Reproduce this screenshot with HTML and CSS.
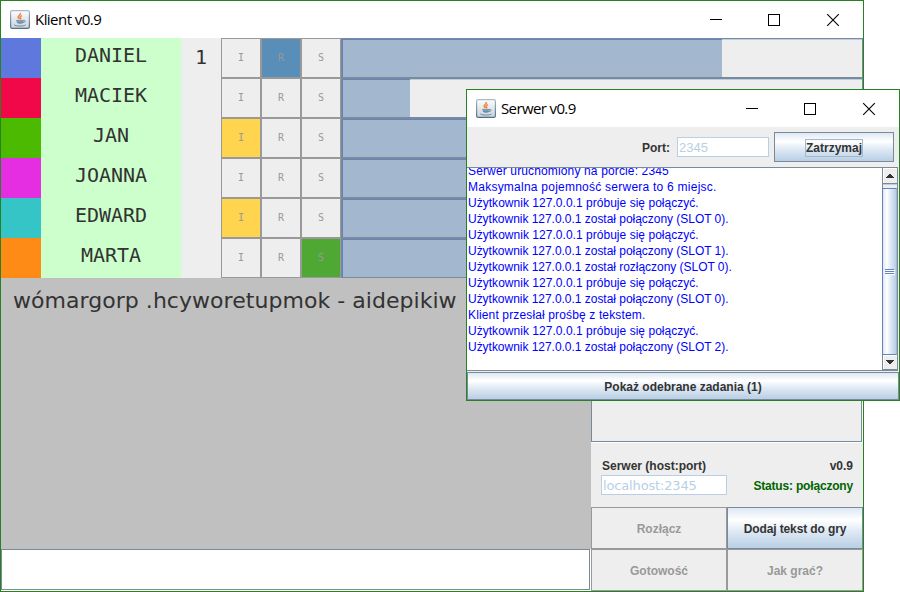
FILE: index.html
```html
<!DOCTYPE html>
<html lang="pl">
<head>
<meta charset="utf-8">
<title>Klient v0.9</title>
<link rel="stylesheet" href="styles.css">
</head>
<body>
<svg width="0" height="0" class="defs">
  <defs>
    <linearGradient id="tile" x1="0" y1="0" x2="0" y2="1"><stop offset="0" stop-color="#fdfdfd"/><stop offset="1" stop-color="#c9d2d9"/></linearGradient>
    <linearGradient id="edge" x1="0" y1="0" x2="0" y2="1"><stop offset="0" stop-color="#a9bac6"/><stop offset="1" stop-color="#537083"/></linearGradient>
    <symbol id="java" viewBox="0 0 20 19">
      <rect x=".6" y=".6" width="18.8" height="17.8" rx="1.6" fill="url(#tile)" stroke="url(#edge)" stroke-width="1.2"/>
      <path d="M10.400 3c.8 1.800-3 2.600-2.200 4.600.3.800 1 1 1.200 1.600M12 5.600c-2.300 1-2.200 1.700-1.300 2.700.3.400.1.800-.4 1.200" fill="none" stroke="#ee8746" stroke-width="1.500"/>
      <path d="M6.500 10.600h7v1c0 1.500-1.200 2.300-3.400 2.300s-3.400-.8-3.600-2.300z" fill="#8ba6bb"/>
      <path d="M6.300 10.400c2 .6 5.300.6 7.300 0M7 12.400c1.800.5 4 .5 5.700 0M13.300 10.600c2.800-.8 2.300 1.700-.3 2M4.300 14.800c1 1.700 10 1.700 11.300 0" fill="none" stroke="#6a8ba6" stroke-width="1"/>
    </symbol>
    <symbol id="controls" viewBox="0 0 130 14">
      <path d="M0 6.500h12" stroke="#000" fill="none"/>
      <rect x="58.500" y="1.500" width="11" height="11" stroke="#000" fill="none"/>
      <path d="M117.200 1.200l11.600 11.600M128.800 1.200L117.200 12.800" stroke="#000" stroke-width="1.100" fill="none"/>
    </symbol>
  </defs>
</svg>

<main class="window client">
  <header class="titlebar">
    <svg class="app-icon"><use href="#java"/></svg>
    <h1 class="title">Klient v0.9</h1>
    <svg class="controls"><use href="#controls"/></svg>
  </header>
  <section class="players">
    <div class="player"><i class="swatch blue"></i><span class="name">DANIEL</span><span class="place">1</span><b class="cell">I</b><b class="cell is-r">R</b><b class="cell">S</b><div class="progress"><div class="fill" style="width:380px"></div></div></div>
    <div class="player"><i class="swatch red"></i><span class="name">MACIEK</span><span class="place"></span><b class="cell">I</b><b class="cell">R</b><b class="cell">S</b><div class="progress"><div class="fill" style="width:68px"></div></div></div>
    <div class="player"><i class="swatch green"></i><span class="name">JAN</span><span class="place"></span><b class="cell is-i">I</b><b class="cell">R</b><b class="cell">S</b><div class="progress"><div class="fill" style="width:520px"></div></div></div>
    <div class="player"><i class="swatch pink"></i><span class="name">JOANNA</span><span class="place"></span><b class="cell">I</b><b class="cell">R</b><b class="cell">S</b><div class="progress"><div class="fill" style="width:520px"></div></div></div>
    <div class="player"><i class="swatch teal"></i><span class="name">EDWARD</span><span class="place"></span><b class="cell is-i">I</b><b class="cell">R</b><b class="cell">S</b><div class="progress"><div class="fill" style="width:520px"></div></div></div>
    <div class="player"><i class="swatch orange"></i><span class="name">MARTA</span><span class="place"></span><b class="cell">I</b><b class="cell">R</b><b class="cell is-s">S</b><div class="progress"><div class="fill" style="width:520px"></div></div></div>
  </section>
  <div class="body">
    <section class="game">
      <div class="task"><span class="task-text">wómargorp .hcyworetupmok - aidepikiw</span></div>
      <div class="answer"></div>
    </section>
    <aside class="side">
      <div class="list"></div>
      <div class="connection">
        <div class="line"><span>Serwer (host:port)</span><span>v0.9</span></div>
        <div class="line"><span class="field host">localhost:2345</span><span class="status">Status: połączony</span></div>
      </div>
      <div class="actions">
        <span class="btn off">Rozłącz</span>
        <span class="btn add">Dodaj tekst do gry</span>
        <span class="btn off">Gotowość</span>
        <span class="btn off">Jak grać?</span>
      </div>
    </aside>
  </div>
</main>

<section class="window server">
  <header class="titlebar">
    <svg class="app-icon"><use href="#java"/></svg>
    <h2 class="title server-title">Serwer v0.9</h2>
    <svg class="controls"><use href="#controls"/></svg>
  </header>
  <div class="toolbar">
    <span class="port-label">Port:</span>
    <span class="field port">2345</span>
    <span class="btn stop"><span class="focus">Zatrzymaj</span></span>
  </div>
  <div class="log-pane">
    <div class="log">
      <p class="wide">Serwer uruchomiony na porcie: 2345</p>
      <p class="wider">Maksymalna pojemność serwera to 6 miejsc.</p>
      <p class="try">Użytkownik 127.0.0.1 próbuje się połączyć.</p>
      <p class="slot">Użytkownik 127.0.0.1 został połączony (SLOT 0).</p>
      <p class="try">Użytkownik 127.0.0.1 próbuje się połączyć.</p>
      <p class="slot">Użytkownik 127.0.0.1 został połączony (SLOT 1).</p>
      <p class="slot">Użytkownik 127.0.0.1 został rozłączony (SLOT 0).</p>
      <p class="try">Użytkownik 127.0.0.1 próbuje się połączyć.</p>
      <p class="slot">Użytkownik 127.0.0.1 został połączony (SLOT 0).</p>
      <p class="wide">Klient przesłał prośbę z tekstem.</p>
      <p class="try">Użytkownik 127.0.0.1 próbuje się połączyć.</p>
      <p class="slot">Użytkownik 127.0.0.1 został połączony (SLOT 2).</p>
    </div>
    <div class="scrollbar">
      <div class="arrow"><svg width="8" height="4" shape-rendering="crispEdges"><path d="M3 0h2v1h1v1h1v1h1v1H0V3h1V2h1V1h1z" fill="#333"/></svg></div>
      <div class="gap"></div>
      <div class="thumb"><i></i><i></i><i></i></div>
      <div class="arrow down"><svg width="8" height="4" shape-rendering="crispEdges"><path d="M0 0h8v1H7v1H6v1H5v1H3V3H2V2H1V1H0z" fill="#333"/></svg></div>
    </div>
  </div>
  <span class="btn tasks">Pokaż odebrane zadania (1)</span>
</section>
</body>
</html>
```
FILE: styles.css
```css
* { box-sizing: border-box; }
body {
  margin: 0;
  width: 900px;
  height: 592px;
  overflow: hidden;
  background: #fff;
  color: #333;
  font: bold 12px/16px "Liberation Sans", sans-serif;
}
p, h1, h2 { margin: 0; }
.defs { position: absolute; }
.window {
  display: flex;
  flex-direction: column;
  border: 1px solid #26821f;
  background: #eee;
}
.client { width: 864px; height: 592px; }
.server { position: absolute; left: 466px; top: 89px; width: 434px; height: 312px; }

.titlebar {
  display: flex;
  align-items: center;
  flex: none;
  height: 37px;
  padding: 0 23px 0 9px;
  background: #fff;
}
.app-icon { width: 20px; height: 19px; margin-right: 5px; margin-top: -1px; }
.title { flex: 1; margin-top: -2px; color: #000; font: 15px/20px "Open Sans", sans-serif; letter-spacing: -0.55px; }
.server-title { letter-spacing: -0.62px; }
.controls { width: 130px; height: 14px; }

.player { display: flex; height: 40px; }
.swatch { width: 40px; }
.blue { background: #5f78de; }
.red { background: #f00848; }
.green { background: #4cba00; }
.pink { background: #e52de1; }
.teal { background: #35c5c7; }
.orange { background: #ff8b17; }
.name, .place { font: 20px/35px "DejaVu Sans Mono", monospace; text-align: center; }
.name { width: 140px; background: #cfc; letter-spacing: -0.04px; }
.place { width: 40px; line-height: 38px; }
.cell {
  width: 40px;
  border: 1px solid #999;
  color: #999;
  font: 10px/38px "DejaVu Sans Mono", monospace;
  text-align: center;
}
.is-i { background: #ffd44f; }
.is-r { background: #588eb7; }
.is-s { background: #4fa833; }
.progress {
  width: 522px;
  border: 1px solid #7a8a99;
  background: #eee;
  box-shadow: inset 0 1px #b8cfe5;
}
.fill { height: 38px; background: #a3b8cf; border-top: 1px solid #6382bf; border-left: 1px solid #6382bf; }

.body { display: flex; flex: 1; }
.game { display: flex; flex-direction: column; width: 590px; background: #fff; }
.task { flex: 1; padding: 8px 0 0 12px; background: #c0c0c0; }
.task-text { font: 22px/30px "DejaVu Sans", sans-serif; letter-spacing: 0.04px; white-space: nowrap; }
.answer { height: 41px; margin: 0 1px 1px 0; background: #fff; border: 1px solid #7a8a99; }
.side { flex: 1; display: flex; flex-direction: column; }
.list { height: 164px; margin-right: 1px; border: 1px solid #7a8a99; box-shadow: 0 1px #fff, 1px 0 #fff; }
.connection { flex: 1; padding: 16px 10px 0; }
.line { display: flex; justify-content: space-between; align-items: center; height: 16px; padding-left: 1px; }
.line + .line { height: 22px; padding-left: 0; }
.field { border: 1px solid #b8cfe5; background: #fff; color: #b8cfe5; height: 20px; line-height: 19px; padding-left: 1px; }
.host { width: 126px; font: 13px/19px "DejaVu Sans", sans-serif; letter-spacing: -0.15px; }
.status { padding-top: 2px; color: #006400; letter-spacing: -0.18px; }
.actions { display: grid; grid-template-columns: 136px 136px; grid-template-rows: 42px 42px; }
.btn {
  display: flex;
  align-items: center;
  justify-content: center;
  border: 1px solid #7a8a99;
  background: linear-gradient(#dde8f3 0%, #fff 30%, #dde8f3 60%, #b8cfe5 100%);
}
.actions .btn, .tasks { padding-top: 2px; }
.add { letter-spacing: -0.12px; }
.off { background: #eee; border-color: #999; color: #999; }

.toolbar { display: flex; align-items: center; justify-content: flex-end; height: 40px; flex: none; padding-right: 5px; }
.port-label { padding-top: 1px; }
.port { width: 92px; margin: 0 5px 0 7px; font-weight: normal; font-size: 13px; }
.stop { width: 120px; height: 30px; }
.focus { height: 18px; line-height: 16px; border: 1px solid #a3b8cc; margin-top: 1px; }
.log-pane { display: flex; height: 204px; margin-right: 1px; border-top: 1px solid #7a8a99; border-bottom: 1px solid #7a8a99; border-right: 1px solid #7a8a99; background: #fff; }
.log { display: flex; flex-direction: column; justify-content: flex-end; flex: 1; height: 187px; overflow: hidden; padding-left: 1px; color: #00f; font-weight: normal; white-space: nowrap; }
.log p { flex: none; }
.wide { letter-spacing: 0.14px; }
.wider { letter-spacing: 0.24px; }
.try { letter-spacing: 0.03px; }
.slot { letter-spacing: -0.03px; }
.scrollbar { display: flex; flex-direction: column; width: 15px; border-left: 1px solid #7a8a99; background: #eee; }
.arrow { display: flex; align-items: center; justify-content: center; height: 16px; border-bottom: 1px solid #7a8a99; box-shadow: inset 1px 1px #fff; }
.gap { height: 4px; border-top: 1px solid #b8cfe5; }
.thumb {
  flex: 1;
  display: flex;
  flex-direction: column;
  justify-content: center;
  align-items: center;
  gap: 1px;
  margin-left: -1px;
  border: 1px solid #6382bf;
  border-right-color: #a3b8cc;
  background: linear-gradient(90deg, #dde8f3, #fff 30%, #dde8f3 60%, #b8cfe5);
}
.thumb i { width: 9px; height: 1px; background: #6382bf; box-shadow: 1px 1px #fff; }
.down { height: 15px; }
.tasks { height: 28px; margin-top: 1px; }
```
